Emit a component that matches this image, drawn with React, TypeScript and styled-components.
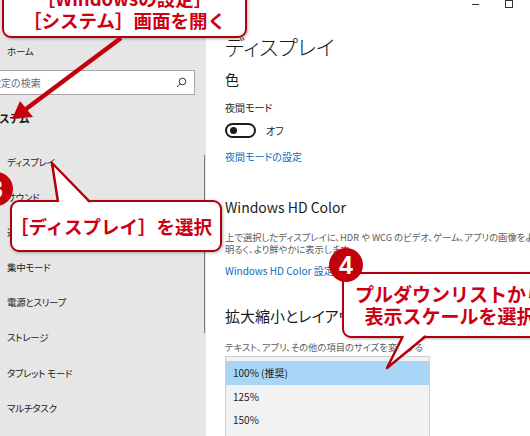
import React from "react";
import styled, { createGlobalStyle } from "styled-components";

const Global = createGlobalStyle`
  html, body { margin: 0; padding: 0; }
  body {
    width: 530px; height: 436px; overflow: hidden; background: #fff;
    font-family: "Noto Sans CJK JP", "Noto Sans", sans-serif; color: #1b1b1b;
  }
`;

const Page = styled.div`
  position: relative;
  width: 530px;
  height: 436px;
  overflow: hidden;
  display: flex;
  font-feature-settings: "palt";
`;

/* ---------- sidebar ---------- */
const Sidebar = styled.aside`
  width: 206px;
  flex: none;
  background: #e6e6e6;
  display: flex;
`;
const Nav = styled.nav`
  flex: 1;
  min-width: 0;
  display: flex;
  flex-direction: column;
`;
const HomeLink = styled.div`
  margin-top: 44px;
  padding-left: 7px;
  font-size: 9.5px;
  line-height: 14px;
  letter-spacing: -0.2px;
`;
const SearchBox = styled.div`
  margin: 12px 0 0 -20px;
  width: 215px;
  height: 25px;
  box-sizing: border-box;
  background: #fff;
  border: 1px solid #a8a8a8;
  display: flex;
  align-items: center;
  padding: 0 7px 0 10px;
  font-size: 10px;
  color: #6a6a6a;
`;
const SearchText = styled.span`
  flex: 1;
`;
const Section = styled.div`
  margin: 16px 0 0 -11px;
  font-size: 11px;
  font-weight: 700;
  line-height: 14px;
`;
const NavList = styled.ul`
  list-style: none;
  margin: 19.5px 0 0;
  padding: 0;
`;
const NavItem = styled.li`
  height: 35.2px;
  line-height: 35.2px;
  padding-left: 7px;
  font-size: 9.5px;
  letter-spacing: -0.3px;
  white-space: nowrap;
`;
const ScrollTrack = styled.div`
  width: 1px;
  margin-right: 1px;
  padding-top: 155px;
`;
const ScrollThumb = styled.div`
  width: 1px;
  height: 178px;
  background: #7a7a7a;
`;

/* ---------- content ---------- */
const Content = styled.main`
  flex: 1;
  min-width: 0;
  padding-left: 19px;
  display: flex;
  flex-direction: column;
  overflow: hidden;
`;
const WindowBar = styled.div`
  height: 16px;
  display: flex;
  justify-content: flex-end;
  align-items: center;
  gap: 26px;
  padding-right: 17px;
`;
const MinIcon = styled.span`
  width: 7px;
  height: 1px;
  background: #333;
`;
const MaxIcon = styled.span`
  width: 8px;
  height: 8px;
  box-sizing: border-box;
  border: 1px solid #333;
`;
const PageTitle = styled.h1`
  margin: 26px 0 0;
  font-size: 21px;
  font-weight: 300;
  line-height: 24px;
`;
const SubTitle = styled.h2<{ $mt: number; $size?: number }>`
  margin: ${(p) => p.$mt}px 0 0;
  font-size: ${(p) => p.$size ?? 15}px;
  font-weight: 400;
  line-height: 20px;
  white-space: nowrap;
`;
const Label = styled.div<{ $mt: number }>`
  margin-top: ${(p) => p.$mt}px;
  font-size: 10px;
  line-height: 14px;
  white-space: nowrap;
`;
const ToggleRow = styled.div`
  margin-top: 8px;
  display: flex;
  align-items: center;
  gap: 10px;
  font-size: 10px;
  line-height: 15px;
`;
const Toggle = styled.span`
  width: 31px;
  height: 15px;
  box-sizing: border-box;
  border: 2px solid #1b1b1b;
  border-radius: 8px;
  display: flex;
  align-items: center;
  padding-left: 3px;
`;
const Knob = styled.span`
  width: 7px;
  height: 7px;
  border-radius: 50%;
  background: #1b1b1b;
`;
const Link = styled.a<{ $mt: number }>`
  margin-top: ${(p) => p.$mt}px;
  font-size: 10px;
  line-height: 14px;
  color: #0a6bc4;
  text-decoration: none;
  white-space: nowrap;
`;
const Description = styled.p<{ $mt: number }>`
  margin: ${(p) => p.$mt}px 0 0;
  font-size: 9.3px;
  line-height: 12px;
  color: #5c5c5c;
  white-space: nowrap;
`;
const Dropdown = styled.div`
  margin-top: 3px;
  width: 205px;
  box-sizing: border-box;
  border: 1px solid #cfcfcf;
  background: #f2f2f2;
  padding-top: 4px;
`;
const Option = styled.div<{ $active?: boolean }>`
  height: 23.5px;
  line-height: 23.5px;
  padding-left: 7px;
  font-size: 10px;
  background: ${(p) => (p.$active ? "#a9d6f7" : "transparent")};
`;

/* ---------- annotation overlays ---------- */
const Callout = styled.div<{ $x: number; $y: number; $w: number; $h: number; $size: number; $pr?: number }>`
  position: absolute;
  left: ${(p) => p.$x}px;
  top: ${(p) => p.$y}px;
  width: ${(p) => p.$w}px;
  height: ${(p) => p.$h}px;
  box-sizing: border-box;
  padding-right: ${(p) => p.$pr ?? 0}px;
  background: #fff;
  border: 2.5px solid #b3000c;
  border-radius: 9px;
  box-shadow: 1px 1px 3px rgba(0, 0, 0, 0.3);
  display: flex;
  flex-direction: column;
  align-items: center;
  justify-content: center;
  color: #cc0012;
  font-weight: 700;
  font-size: ${(p) => p.$size}px;
  line-height: 22px;
  font-feature-settings: normal;
  white-space: nowrap;
`;
const Badge = styled.div<{ $x: number; $y: number }>`
  position: absolute;
  left: ${(p) => p.$x}px;
  top: ${(p) => p.$y}px;
  width: 34px;
  height: 34px;
  border-radius: 50%;
  background: #c4000c;
  color: #fff;
  font-family: "Liberation Sans", "DejaVu Sans", sans-serif;
  font-weight: 700;
  font-size: 25px;
  line-height: 34px;
  text-align: center;
`;
const Overlay = styled.svg`
  position: absolute;
  left: 0;
  top: 0;
  width: 530px;
  height: 436px;
  pointer-events: none;
`;

const navItems = [
  "ディスプレイ",
  "サウンド",
  "通知とアクション",
  "集中モード",
  "電源とスリープ",
  "ストレージ",
  "タブレット モード",
  "マルチタスク",
];

export default function App() {
  return (
    <>
      <Global />
      <Page>
        <Sidebar>
          <Nav>
            <HomeLink>ホーム</HomeLink>
            <SearchBox>
              <SearchText>設定の検索</SearchText>
              <svg width="11" height="11" viewBox="0 0 11 11" fill="none" stroke="#333" strokeWidth="1">
                <circle cx="6.5" cy="4.5" r="3.3" />
                <line x1="4.1" y1="6.9" x2="1" y2="10" />
              </svg>
            </SearchBox>
            <Section>システム</Section>
            <NavList>
              {navItems.map((t) => (
                <NavItem key={t}>{t}</NavItem>
              ))}
            </NavList>
          </Nav>
          <ScrollTrack>
            <ScrollThumb />
          </ScrollTrack>
        </Sidebar>

        <Content>
          <WindowBar>
            <MinIcon />
            <MaxIcon />
          </WindowBar>
          <PageTitle>ディスプレイ</PageTitle>
          <SubTitle $mt={11} $size={14}>色</SubTitle>
          <Label $mt={12}>夜間モード</Label>
          <ToggleRow>
            <Toggle>
              <Knob />
            </Toggle>
            オフ
          </ToggleRow>
          <Link $mt={12}>夜間モードの設定</Link>
          <SubTitle $mt={33} $size={14}>Windows HD Color</SubTitle>
          <Description $mt={14}>
            上で選択したディスプレイに、HDR や WCG のビデオ、ゲーム、アプリの画像をより
            <br />
            明るく、より鮮やかに表示します。
          </Description>
          <Link $mt={9}>Windows HD Color 設定</Link>
          <SubTitle $mt={28}>拡大縮小とレイアウト</SubTitle>
          <Description $mt={15}>テキスト、アプリ、その他の項目のサイズを変更する</Description>
          <Dropdown>
            <Option $active>100% (推奨)</Option>
            <Option>125%</Option>
            <Option>150%</Option>
            <Option>175%</Option>
          </Dropdown>
        </Content>

        <Callout $x={2} $y={-20} $w={245} $h={58} $size={18.5}>
          <span>［Windowsの設定］</span>
          <span>［システム］画面を開く</span>
        </Callout>
        <Callout $x={10} $y={200} $w={212} $h={52} $size={18.5} $pr={10}>
          <span>［ディスプレイ］を選択</span>
        </Callout>
        <Callout $x={342} $y={272} $w={216} $h={66} $size={19}>
          <span>プルダウンリストから</span>
          <span>表示スケールを選択</span>
        </Callout>

        <Overlay viewBox="0 0 530 436">
          <line x1="121" y1="38" x2="26" y2="109" stroke="#c4000c" strokeWidth="4.5" />
          <polygon points="12,119 20,101 33,117" fill="#c4000c" />
          <polygon points="52,163 58,204 90,204" fill="#fff" />
          <polyline points="58,202 52,163 90,202" fill="none" stroke="#b3000c" strokeWidth="2.5" strokeLinejoin="round" />
          <polygon points="403,334 426,334 387,368" fill="#fff" />
          <polyline points="403,336 387,368 426,336" fill="none" stroke="#b3000c" strokeWidth="2.5" strokeLinejoin="round" />
        </Overlay>

        <Badge $x={-21} $y={172}>3</Badge>
        <Badge $x={329} $y={248}>4</Badge>
      </Page>
    </>
  );
}
